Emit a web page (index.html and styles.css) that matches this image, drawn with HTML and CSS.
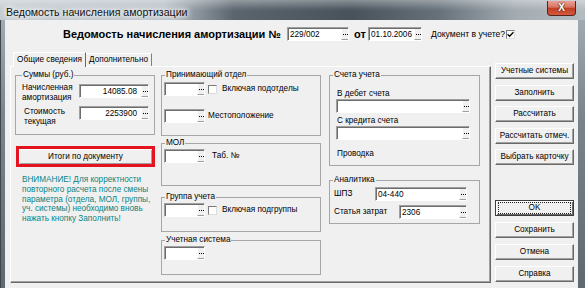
FILE: index.html
```html
<!DOCTYPE html>
<html lang="ru">
<head>
<meta charset="utf-8">
<title>Ведомость начисления амортизации</title>
<link rel="stylesheet" href="styles.css">
</head>
<body>
<div class="window">
  <div class="titlebar">
    <span class="title">Ведомость начисления амортизации</span>
    <div class="close">X</div>
  </div>
  <div class="client">
    <div class="header">
      <span class="htitle">Ведомость начисления амортизации №</span>
      <span class="field hf1"><span class="val">229/002</span><span class="dots"></span></span>
      <span class="hot">от</span>
      <span class="field hf2"><span class="val">01.10.2006</span><span class="dots"></span></span>
      <span class="doclabel">Документ в учете?</span>
      <span class="chk"><svg width="7" height="7" viewBox="0 0 7 7"><path d="M0.6 3.2 L2.6 5.3 L6.4 1.2" stroke="#000" stroke-width="1.3" fill="none"/></svg></span>
    </div>
    <div class="main">
      <div class="tabs">
        <div class="tabstrip">
          <div class="tab active">Общие сведения</div>
          <div class="tab">Дополнительно</div>
        </div>
        <div class="panel">
          <div class="col c1">
            <fieldset class="grp g-sum">
              <legend>Суммы (руб.)</legend>
              <div class="srow r1">
                <div class="slabel">Начисленная<br>амортизация</div>
                <span class="field sf"><span class="val right">14085.08</span><span class="dots"></span></span>
              </div>
              <div class="srow r2">
                <div class="slabel l2">Стоимость<br>текущая</div>
                <span class="field sf"><span class="val right">2253900</span><span class="dots"></span></span>
              </div>
            </fieldset>
            <div class="btn redbtn">Итоги по документу</div>
            <p class="warn">ВНИМАНИЕ! Для корректности<br>повторного расчета после смены<br>параметра (отдела, МОЛ, группы,<br>уч. системы) необходимо вновь<br>нажать кнопку Заполнить!</p>
          </div>
          <div class="col c2">
            <fieldset class="grp g-otd">
              <legend>Принимающий отдел</legend>
              <div class="crow ra">
                <span class="field cf"><span class="val"></span><span class="dots"></span></span>
                <span class="chk"></span>
                <span class="clab">Включая подотделы</span>
              </div>
              <div class="crow rb">
                <span class="field cf"><span class="val"></span><span class="dots"></span></span>
                <span class="clab2">Местоположение</span>
              </div>
            </fieldset>
            <fieldset class="grp g-mol">
              <legend>МОЛ</legend>
              <div class="crow rm">
                <span class="field cf"><span class="val"></span><span class="dots"></span></span>
                <span class="clab3">Таб. №</span>
              </div>
            </fieldset>
            <fieldset class="grp g-grp">
              <legend>Группа учета</legend>
              <div class="crow rg">
                <span class="field cf"><span class="val"></span><span class="dots"></span></span>
                <span class="chk"></span>
                <span class="clab">Включая подгруппы</span>
              </div>
            </fieldset>
            <fieldset class="grp g-sys">
              <legend>Учетная система</legend>
              <div class="crow rs">
                <span class="field cf"><span class="val"></span><span class="dots"></span></span>
              </div>
            </fieldset>
          </div>
          <div class="col c3">
            <fieldset class="grp g-acc">
              <legend>Счета учета</legend>
              <div class="alab al1">В дебет счета</div>
              <span class="field af"><span class="val"></span><span class="dots"></span></span>
              <div class="alab al2">С кредита счета</div>
              <span class="field af"><span class="val"></span><span class="dots"></span></span>
              <div class="alab al3">Проводка</div>
            </fieldset>
            <fieldset class="grp g-an">
              <legend>Аналитика</legend>
              <div class="nrow n1">
                <span class="nlab w1">ШПЗ</span>
                <span class="field nf1"><span class="val">04-440</span><span class="dots"></span></span>
              </div>
              <div class="nrow n2">
                <span class="nlab w2">Статья затрат</span>
                <span class="field nf2"><span class="val">2306</span><span class="dots"></span></span>
              </div>
            </fieldset>
          </div>
        </div>
      </div>
      <div class="side">
        <div class="sgrp sg1">
          <div class="btn sbtn">Учетные системы</div>
          <div class="btn sbtn">Заполнить</div>
          <div class="btn sbtn">Рассчитать</div>
          <div class="btn sbtn">Рассчитать отмеч.</div>
          <div class="btn sbtn">Выбрать карточку</div>
        </div>
        <div class="sgrp sg2">
          <div class="btn sbtn ok"><span class="focus">OK</span></div>
          <div class="btn sbtn">Сохранить</div>
          <div class="btn sbtn">Отмена</div>
          <div class="btn sbtn">Справка</div>
        </div>
      </div>
    </div>
  </div>
</div>
</body>
</html>
```
FILE: styles.css
```css
* { box-sizing: border-box; }
html, body { margin: 0; padding: 0; }
body {
  width: 585px;
  height: 288px;
  overflow: hidden;
  font-family: "Liberation Sans", Arial, sans-serif;
  font-size: 8.2px;
  line-height: 10px;
  color: #000;
}
.window {
  width: 585px;
  height: 288px;
  display: flex;
  flex-direction: column;
  background: linear-gradient(to bottom, #a9b2b9 0%, #7b848b 40%, #5f6870 100%);
  border-left: 1px solid #3e454b;
}
.titlebar {
  height: 20px;
  flex: none;
  display: flex;
  align-items: flex-start;
  padding-left: 6px;
  margin-left: -1px;
  background:
    linear-gradient(to bottom, rgba(255,255,255,.35) 0, rgba(255,255,255,.08) 40%, rgba(0,0,0,0) 55%),
    linear-gradient(to right, #c4ccd2 0%, #b7c0c7 28%, #5b656e 40%, #48525b 60%, #66717a 75%, #a3abb1 88%, #b4bcc1 100%);
}
.title {
  margin-top: 6px;
  font-size: 10.6px;
  line-height: 12px;
  color: #111;
  text-shadow: 0 0 4px #fff, 0 0 6px #fff, 0 0 8px #fff;
}
.close {
  margin-left: auto;
  margin-right: 9px;
  margin-top: 1px;
  width: 29px;
  height: 15px;
  border: 1px solid #5a231a;
  border-top: none;
  border-radius: 0 0 4px 4px;
  background: linear-gradient(to bottom, #e9a395 0%, #d7735f 45%, #c13d24 50%, #d45a3f 100%);
  color: #fff;
  font-weight: bold;
  font-size: 10px;
  line-height: 14px;
  text-align: center;
  text-shadow: 0 0 2px #5a1a10, 0 0 1px #5a1a10;
}
.client {
  flex: 1;
  margin: 0 7px 0 4px;
  background: #f0f0f0;
}

/* header */
.header {
  display: flex;
  align-items: center;
  height: 14px;
  margin-top: 7px;
  padding-left: 58px;
}
.htitle {
  width: 224px;
  font-weight: bold;
  font-size: 11px;
  white-space: nowrap;
}
.hf1 { width: 62px; }
.hot {
  width: 11px;
  margin-left: 5px;
  font-weight: bold;
  font-size: 11px;
}
.hf2 { width: 54px; margin-left: 3px; }
.doclabel { margin-left: 9px; width: 75px; white-space: nowrap; font-size: 8.6px; }

/* fields */
.field {
  display: flex;
  height: 14px;
  flex: none;
  background: #fff;
  border: 1px solid;
  border-color: #a0a0a0 #ffffff #ffffff #a0a0a0;
  box-shadow: inset 1px 1px #6d6d6d;
}
.val {
  flex: 1;
  padding-left: 2px;
  padding-top: 1px;
  line-height: 11px;
  white-space: nowrap;
  overflow: hidden;
}
.val.right { text-align: right; padding-right: 4px; }
.dots {
  width: 7px;
  flex: none;
  background: #f0f0f0;
  border-left: 1px solid #fff;
  border-bottom: 1px solid #a0a0a0;
  margin-top: 1px;
  display: flex;
  align-items: center;
  justify-content: center;
}
.dots::after {
  content: "";
  width: 5px;
  height: 1px;
  margin-top: 1px;
  background: repeating-linear-gradient(to right, #000 0 1px, transparent 1px 2px);
}
.chk {
  width: 9px;
  height: 9px;
  flex: none;
  background: #fff;
  border: 1px solid;
  border-color: #7a7a7a #dcdcdc #dcdcdc #7a7a7a;
  display: flex;
  align-items: center;
  justify-content: center;
}

/* main */
.main {
  display: flex;
  margin-top: 11px;
  padding-left: 5px;
}
.tabs { width: 481px; flex: none; }
.tabstrip {
  display: flex;
  align-items: flex-end;
  height: 14px;
  padding-left: 3px;
}
.tab {
  height: 13px;
  border: 1px solid;
  border-bottom: none;
  border-color: #fff #808080 #808080 #fff;
  text-align: center;
  line-height: 12px;
  white-space: nowrap;
  background: #f0f0f0;
}
.tab.active {
  width: 73px;
  height: 15px;
  line-height: 13px;
  margin-bottom: -1px;
  position: relative;
  z-index: 1;
  border-right-color: #696969;
}
.tab:not(.active) { width: 66px; border-left: none; }
.panel {
  height: 217px;
  border: 1px solid;
  border-color: #fff #696969 #696969 #fff;
  box-shadow: inset -1px -1px #a0a0a0;
  padding-top: 3px;
  display: flex;
  align-items: flex-start;
}
.col { display: flex; flex-direction: column; }
.c1 { width: 141px; margin-left: 4px; }
.c2 { width: 160px; margin-left: 5px; }
.c3 { width: 151px; margin-left: 8px; }

.grp {
  margin: 0;
  padding: 0;
  border: 1px solid #a6a6a6;
  min-width: 0;
  display: flex;
  flex-direction: column;
  align-items: flex-start;
}
.grp legend {
  padding: 0 1px;
  margin-left: 3px;
  line-height: 10px;
  white-space: nowrap;
}

/* column 1 */
.g-sum { height: 65px; width: 140px; }
.g-sum legend { margin-left: 6px; }
.srow { display: flex; align-items: flex-start; padding-left: 6px; }
.slabel { width: 57px; line-height: 10px; }
.sf { width: 70px; }
.r1 { margin-top: 3px; }
.r1 .sf { margin-top: 1px; }
.r2 { margin-top: 3px; }
.r2 .slabel { margin-top: 1px; padding-left: 2px; }
.btn.redbtn {
  margin: 11px 0 0 1px;
  width: 139px;
  height: 21px;
  border: 3px solid #e3141f;
  box-shadow: inset 1px 1px #fff, inset -1px -1px #a0a0a0;
}
.warn {
  margin: 8px 0 0 7px;
  color: #088585;
  line-height: 9.8px;
  white-space: nowrap;
}

/* column 2 */
.crow { display: flex; align-items: center; padding-left: 2px; }
.cf { width: 41px; }
.crow .chk { margin-left: 3px; }
.clab { margin-left: 5px; white-space: nowrap; }
.clab2 { margin-left: 3px; }
.clab3 { margin-left: 7px; }
.g-otd { height: 66px; width: 160px; }
.ra { margin-top: 2px; }
.rb { margin-top: 13px; }
.g-mol { height: 48px; width: 160px; margin-top: 2px; }
.rm { margin-top: 1px; }
.g-grp { height: 40px; width: 160px; margin-top: 6px; }
.rg { margin-top: 1px; }
.g-sys { height: 40px; width: 160px; margin-top: 3px; }
.rs { margin-top: 1px; }

/* column 3 */
.g-acc { height: 96px; width: 151px; }
.alab { padding-left: 7px; white-space: nowrap; }
.al1 { margin-top: 9px; }
.al2 { margin-top: 3px; }
.al3 { margin-top: 9px; }
.af { width: 134px; margin-left: 6px; }
.g-an { height: 49px; width: 151px; margin-top: 9px; }
.nrow { display: flex; align-items: center; padding-left: 4px; }
.n1 { margin-top: 2px; }
.n2 { margin-top: 4px; }
.nlab { white-space: nowrap; }
.w1 { width: 41px; }
.w2 { width: 65px; }
.nf1 { width: 92px; }
.nf2 { width: 68px; }

/* buttons */
.btn {
  display: flex;
  align-items: center;
  justify-content: center;
  background: #f0f0f0;
  border: 1px solid;
  border-color: #fff #696969 #696969 #fff;
  box-shadow: inset -1px -1px #a0a0a0;
  white-space: nowrap;
}
.side {
  width: 79px;
  flex: none;
  margin-left: 4px;
  display: flex;
  flex-direction: column;
}
.sgrp { display: flex; flex-direction: column; }
.sg1 { margin-top: 11px; gap: 5.5px; }
.sg2 { margin-top: 35px; gap: 6px; }
.sbtn { height: 16px; }
.btn.ok {
  border: 1px solid #3c3c3c;
  box-shadow: inset 1px 1px #fff, inset -1px -1px #696969;
  padding: 1px 2px;
  align-items: stretch;
}
.focus {
  flex: 1;
  display: flex;
  align-items: center;
  justify-content: center;
  line-height: 10px;
  border: 1px dotted #222;
}
```
